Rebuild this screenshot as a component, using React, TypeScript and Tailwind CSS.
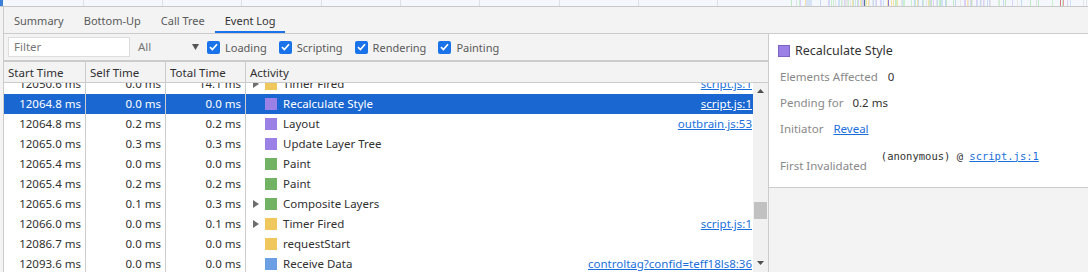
import React from "react";

type Row = {
  start: string;
  self: string;
  total: string;
  arrow?: boolean;
  color: string;
  name: string;
  link?: string;
  selected?: boolean;
};

const YELLOW = "#f0c75d";
const PURPLE = "#9b80e6";
const GREEN = "#72b265";
const BLUE = "#6c9fe3";

const rows: Row[] = [
  { start: "12050.6 ms", self: "0.0 ms", total: "14.1 ms", arrow: true, color: YELLOW, name: "Timer Fired", link: "script.js:1" },
  { start: "12064.8 ms", self: "0.0 ms", total: "0.0 ms", color: PURPLE, name: "Recalculate Style", link: "script.js:1", selected: true },
  { start: "12064.8 ms", self: "0.2 ms", total: "0.2 ms", color: PURPLE, name: "Layout", link: "outbrain.js:53" },
  { start: "12065.0 ms", self: "0.3 ms", total: "0.3 ms", color: PURPLE, name: "Update Layer Tree" },
  { start: "12065.4 ms", self: "0.0 ms", total: "0.0 ms", color: GREEN, name: "Paint" },
  { start: "12065.4 ms", self: "0.2 ms", total: "0.2 ms", color: GREEN, name: "Paint" },
  { start: "12065.6 ms", self: "0.1 ms", total: "0.3 ms", arrow: true, color: GREEN, name: "Composite Layers" },
  { start: "12066.0 ms", self: "0.0 ms", total: "0.1 ms", arrow: true, color: YELLOW, name: "Timer Fired", link: "script.js:1" },
  { start: "12086.7 ms", self: "0.0 ms", total: "0.0 ms", color: YELLOW, name: "requestStart" },
  { start: "12093.6 ms", self: "0.0 ms", total: "0.0 ms", color: BLUE, name: "Receive Data", link: "controltag?confid=teff18ls8:36" },
];

function Overview() {
  let seed = 7;
  const rnd = () => {
    seed = (seed * 1103515245 + 12345) % 2147483648;
    return seed / 2147483648;
  };
  const palette = ["#c9f0cb", "#cfe0f7", "#f6e2a6", "#ddd0f6", "#e6e6e6", "#bfe9c1", "#c4d8f3"];
  const lines: { x: number; c: string }[] = [];
  for (let i = 0; i < 140; i++) {
    const r = rnd();
    let x: number;
    if (r < 0.75) x = 822 + rnd() * 180;
    else x = 787 + rnd() * 300;
    const c = palette[Math.floor(rnd() * palette.length)];
    lines.push({ x: Math.round(x), c });
  }
  const grid = [83, 162, 241, 321, 400, 479, 559, 638, 717, 796, 875, 955, 1036];
  return (
    <svg width={1088} height={6} className="block">
      <rect x={0} y={0} width={1088} height={6} fill="#f4f7fc" />
      {grid.map((g) => (
        <rect key={g} x={g} y={0} width={1} height={6} fill="#dde1e7" />
      ))}
      <rect x={805} y={0} width={7} height={6} fill="#d5e3f5" />
      {lines.map((l, i) => (
        <rect key={i} x={l.x} y={0} width={1} height={6} fill={l.c} />
      ))}
      <rect x={864} y={0} width={1} height={6} fill="#5b6fa8" />
      <rect x={888} y={0} width={1} height={6} fill="#8a7bd0" />
      <rect x={1060} y={0} width={1} height={6} fill="#d27a7a" />
      <rect x={1063} y={0} width={1} height={6} fill="#e0a0a0" />
      <rect x={0} y={0} width={3} height={6} fill="#3b7fd9" />
    </svg>
  );
}

function Checkbox({ label }: { label: string }) {
  return (
    <div className="flex items-center ml-[12px]">
      <div className="w-[13px] h-[13px] rounded-[2px] bg-[#1a73e8] flex items-center justify-center">
        <svg width="9" height="8" viewBox="0 0 9 8">
          <path d="M1 4.2 L3.4 6.5 L8 1.3" fill="none" stroke="white" strokeWidth="1.7" />
        </svg>
      </div>
      <span className="ml-[5px] text-[#5a5a5a] text-[11px]">{label}</span>
    </div>
  );
}

function Triangle({ color = "#6e6e6e" }: { color?: string }) {
  return (
    <svg width="6" height="8" viewBox="0 0 6 8">
      <polygon points="0,0 6,4 0,8" fill={color} />
    </svg>
  );
}

export default function App() {
  return (
    <div className="w-[1088px] h-[272px] overflow-hidden bg-[#f3f3f3] flex flex-col font-['Noto_Sans',sans-serif] text-[11.5px] text-[#303030] leading-none">
      <div className="h-[7px] border-b border-[#c8c8c8] shrink-0">
        <Overview />
      </div>
      <div className="flex-1 ml-[3px] border-l border-[#cccccc] flex flex-col min-h-0">
        {/* tabs */}
        <div className="h-[27px] shrink-0 border-b border-[#cccccc] flex items-stretch text-[11px]">
          {["Summary", "Bottom-Up", "Call Tree", "Event Log"].map((t) => {
            const sel = t === "Event Log";
            return (
              <div
                key={t}
                className={
                  "px-[10px] pt-[3px] flex items-center border-b-2 " +
                  (sel ? "border-[#1a73e8] text-[#333333]" : "border-transparent text-[#5a5a5a]")
                }
              >
                {t}
              </div>
            );
          })}
        </div>
        <div className="flex-1 flex min-h-0">
          {/* left panel */}
          <div className="w-[764px] flex flex-col min-h-0">
            <div className="h-[28px] shrink-0 border-b-2 border-[#cccccc] flex items-center pl-[4px]">
              <div className="w-[122px] h-[20px] bg-white border border-[#dddddd] flex items-center pl-[5px] text-[#777777]">
                Filter
              </div>
              <div className="w-[66px] ml-[8px] flex items-center text-[#757575]">
                <span>All</span>
                <span className="ml-auto mr-[5px]">
                  <svg width="7" height="6" viewBox="0 0 7 6">
                    <polygon points="0,0 7,0 3.5,6" fill="#555555" />
                  </svg>
                </span>
              </div>
              <div className="-ml-[9px] flex items-center">
                <Checkbox label="Loading" />
                <Checkbox label="Scripting" />
                <Checkbox label="Rendering" />
                <Checkbox label="Painting" />
              </div>
            </div>
            <div className="h-[21px] shrink-0 border-b border-[#cccccc] flex text-[#303030]">
              <div className="w-[82px] border-r border-[#cccccc] pl-[4px] pt-[1px] flex items-center">Start Time</div>
              <div className="w-[80px] border-r border-[#cccccc] pl-[4px] pt-[1px] flex items-center">Self Time</div>
              <div className="w-[80px] border-r border-[#cccccc] pl-[4px] pt-[1px] flex items-center">Total Time</div>
              <div className="flex-1 pl-[4px] pt-[1px] flex items-center">Activity</div>
            </div>
            <div className="flex-1 flex min-h-0 bg-white">
              <div className="flex-1 overflow-hidden min-w-0">
                <div className="-mt-[9px]">
                  {rows.map((r, i) => (
                    <div
                      key={i}
                      className={"h-[20px] flex " + (r.selected ? "bg-[#1a67d2] text-white" : "")}
                    >
                      <div className="w-[82px] border-r border-[#cccccc] pr-[4px] flex items-center justify-end">{r.start}</div>
                      <div className="w-[80px] border-r border-[#cccccc] pr-[4px] flex items-center justify-end">{r.self}</div>
                      <div className="w-[80px] border-r border-[#cccccc] pr-[4px] flex items-center justify-end">{r.total}</div>
                      <div className="flex-1 min-w-0 flex items-center pl-[7px] overflow-hidden">
                        <div className="w-[12px] shrink-0 flex items-center">
                          {r.arrow ? <Triangle color={r.selected ? "#ffffff" : "#6e6e6e"} /> : null}
                        </div>
                        <div className="w-[12px] h-[12px] shrink-0" style={{ backgroundColor: r.color }} />
                        <span className="ml-[6px] whitespace-nowrap">{r.name}</span>
                        {r.link ? (
                          <span
                            className={
                              "ml-auto pr-[1px] pl-[8px] underline whitespace-nowrap " +
                              (r.selected ? "text-white" : "text-[#1a6fdb]")
                            }
                          >
                            {r.link}
                          </span>
                        ) : null}
                      </div>
                    </div>
                  ))}
                </div>
              </div>
              {/* scrollbar */}
              <div className="w-[15px] shrink-0 bg-[#f1f1f1] flex flex-col">
                <div className="h-[15px] flex items-center justify-center">
                  <svg width="7" height="4" viewBox="0 0 7 4">
                    <polygon points="0,4 7,4 3.5,0" fill="#505050" />
                  </svg>
                </div>
                <div className="mt-[104px] mx-[1px] h-[17px] bg-[#c1c1c1]" />
                <div className="mt-auto h-[15px] flex items-start justify-center pt-[4px]">
                  <svg width="7" height="4" viewBox="0 0 7 4">
                    <polygon points="0,0 7,0 3.5,4" fill="#505050" />
                  </svg>
                </div>
              </div>
            </div>
          </div>
          {/* right panel */}
          <div className="flex-1 border-l border-[#cccccc] flex flex-col">
            <div className="h-[154px] bg-white border-b border-[#cccccc] pt-[7px]">
              <div className="h-[20px] flex items-center pl-[9px]">
                <div className="w-[12px] h-[12px] bg-[#9b80e6] border border-[#7a62c6]" />
                <span className="ml-[5px] text-[12.5px] text-[#333333]">Recalculate Style</span>
              </div>
              <div className="mt-[3px] pl-[11px]">
                <div className="h-[26px] flex items-center">
                  <span className="text-[#888888]">Elements Affected</span>
                  <span className="ml-[10px] text-[#333333]">0</span>
                </div>
                <div className="h-[26px] flex items-center">
                  <span className="text-[#888888]">Pending for</span>
                  <span className="ml-[9px] text-[#333333]">0.2 ms</span>
                </div>
                <div className="h-[26px] flex items-center">
                  <span className="text-[#888888]">Initiator</span>
                  <span className="ml-[10px] text-[#1a6fdb] underline">Reveal</span>
                </div>
                <div className="mt-[4px] flex items-start">
                  <span className="mt-[10px] h-[20px] flex items-center text-[#888888]">First Invalidated</span>
                  <span className="ml-[14px] h-[20px] flex items-center font-['DejaVu_Sans_Mono',monospace] text-[10.5px] text-[#333333] whitespace-pre">
                    (anonymous) @ <span className="text-[#1a6fdb] underline">script.js:1</span>
                  </span>
                </div>
              </div>
            </div>
          </div>
        </div>
      </div>
    </div>
  );
}
